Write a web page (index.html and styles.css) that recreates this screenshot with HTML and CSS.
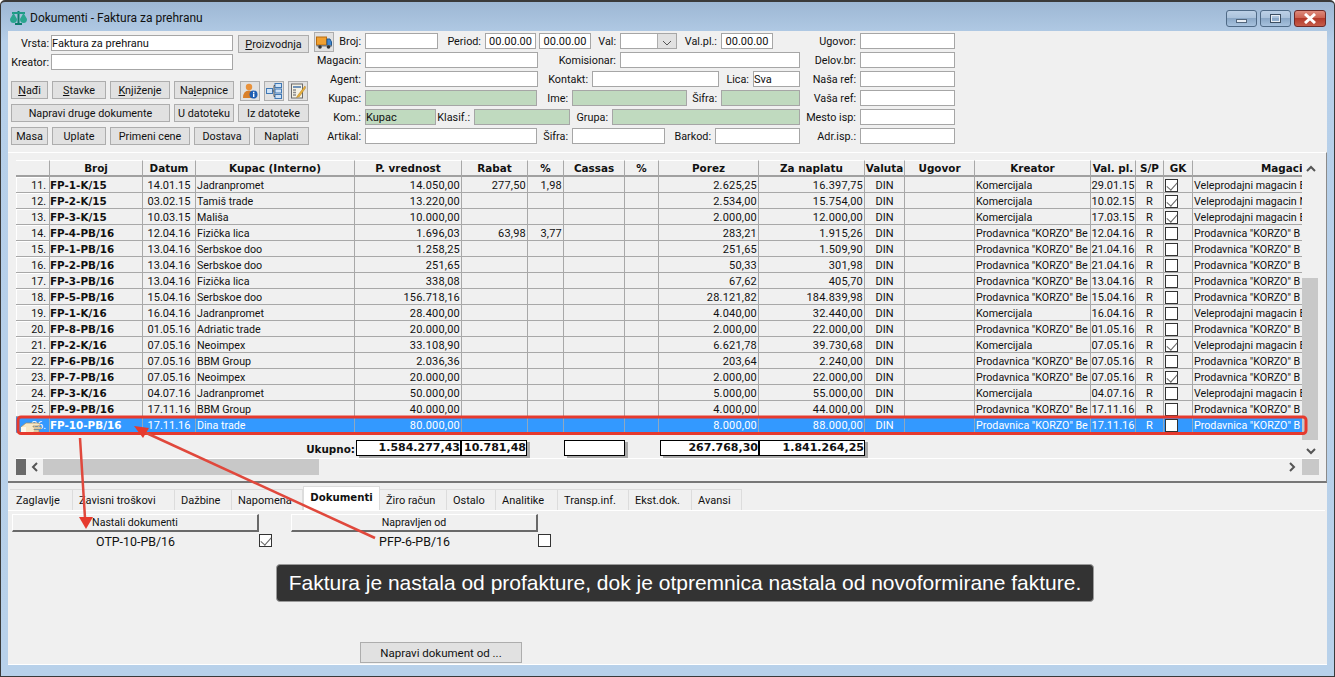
FILE: index.html
```html
<!DOCTYPE html>
<html lang="sr">
<head>
    <meta charset="UTF-8">
    <meta name="viewport" content="width=device-width, initial-scale=1.0">
    <title>Dokumenti - Faktura za prehranu</title>
    <link rel="stylesheet" href="styles.css">
</head>
<body>
<div class="window">
    <div class="titlebar">
        <svg class="app-icon" width="17" height="14" viewBox="0 0 17 14">
            <rect x="7.5" y="0" width="2" height="12" fill="#0d7c6c"/>
            <rect x="2" y="1" width="13" height="2" fill="#1f9a86"/>
            <path d="M0 8 L3.5 2 L7 8 Q7 12 3.5 12 Q0 12 0 8Z" fill="#2aa58f"/>
            <path d="M10 8 L13.5 2 L17 8 Q17 12 13.5 12 Q10 12 10 8Z" fill="#2aa58f"/>
            <rect x="5" y="12" width="7" height="2" fill="#0d7c6c"/>
        </svg>
        <span class="title-text">Dokumenti - Faktura za prehranu</span>
        <div class="caption">
            <div class="cap-btn"><span class="cap-min"></span></div>
            <div class="cap-btn"><span class="cap-max"></span></div>
            <div class="cap-btn cap-close">
                <svg width="14" height="11" viewBox="0 0 14 11"><path d="M2 1 L12 10 M12 1 L2 10" stroke="#fff" stroke-width="3"/></svg>
            </div>
        </div>
    </div>

    <div class="client">
        <div class="form">
            <div class="form-left">
                <div class="top-fields">
                    <label class="lbl">Vrsta:</label>
                    <input class="field" value="Faktura za prehranu">
                    <button class="btn btn-prod"><u>P</u>roizvodnja</button>
                    <label class="lbl">Kreator:</label>
                    <input class="field">
                </div>
                <div class="btn-row">
                    <button class="btn w37"><u>N</u>ađi</button>
                    <button class="btn w54"><u>S</u>tavke</button>
                    <button class="btn w60"><u>K</u>njiženje</button>
                    <button class="btn w60">Na<u>l</u>epnice</button>
                    <button class="btn btn-icon first-icon">
                        <svg width="16" height="16" viewBox="0 0 16 16">
                            <circle cx="7" cy="4" r="3.2" fill="#e8913a"/>
                            <path d="M1 15 Q1 7.5 7 7.5 Q12 7.5 12 15Z" fill="#d9802a"/>
                            <circle cx="11.5" cy="11.5" r="4" fill="#1f5fb4"/>
                            <rect x="11" y="10.5" width="1.4" height="3.5" fill="#fff"/>
                            <rect x="11" y="8.8" width="1.4" height="1.2" fill="#fff"/>
                        </svg>
                    </button>
                    <button class="btn btn-icon">
                        <svg width="16" height="16" viewBox="0 0 16 16">
                            <rect x="9" y="0.5" width="6.5" height="4" fill="#cfe2f5" stroke="#3f78b5"/>
                            <rect x="9" y="11.5" width="6.5" height="4" fill="#cfe2f5" stroke="#3f78b5"/>
                            <rect x="0.5" y="5.5" width="6" height="5" fill="#cfe2f5" stroke="#3f78b5"/>
                            <path d="M6.5 8 H8 M8 2.5 V13.5 M8 2.5 H9 M8 13.5 H9" stroke="#555" fill="none"/>
                            <rect x="9" y="6" width="6.5" height="4" fill="#cfe2f5" stroke="#3f78b5"/>
                        </svg>
                    </button>
                    <button class="btn btn-icon">
                        <svg width="16" height="16" viewBox="0 0 16 16">
                            <rect x="1.5" y="1" width="11" height="14" fill="#f4f1e4" stroke="#6a6a6a"/>
                            <rect x="3" y="3" width="8" height="2" fill="#6f92b8"/>
                            <path d="M3 7 H6 M3 9.5 H6 M3 12 H6" stroke="#8a8a8a" stroke-width="1.4"/>
                            <path d="M15 3 L8 12 L6.5 14.5 L9.5 13.5 L15.5 5Z" fill="#e8b23e" stroke="#b07a1a" stroke-width="0.5"/>
                        </svg>
                    </button>
                </div>
                <div class="btn-row">
                    <button class="btn w159">Napravi druge dokumente</button>
                    <button class="btn w60">U datoteku</button>
                    <button class="btn w71">Iz datoteke</button>
                </div>
                <div class="btn-row">
                    <button class="btn w37">Masa</button>
                    <button class="btn w54">Uplate</button>
                    <button class="btn w80">Primeni cene</button>
                    <button class="btn w56">Dostava</button>
                    <button class="btn w55">Naplati</button>
                </div>
            </div>

            <div class="form-mid">
                <div class="f-row">
                    <button class="btn btn-truck">
                        <svg width="16" height="13" viewBox="0 0 16 13">
                            <rect x="0.5" y="1" width="10" height="8" fill="#f0a030" stroke="#b86c10"/>
                            <path d="M11 3 H14 L15.5 6 V10 H11Z" fill="#3f86d0" stroke="#20588f"/>
                            <rect x="0.5" y="9" width="15" height="1.5" fill="#7a7a7a"/>
                            <circle cx="4" cy="11" r="1.8" fill="#333"/>
                            <circle cx="12.5" cy="11" r="1.8" fill="#333"/>
                        </svg>
                    </button>
                    <label class="lbl l31">Broj:</label><input class="field f73">
                    <label class="lbl l47">Period:</label><input class="field date f51" value="00.00.00"><input class="field date f52 ml3" value="00.00.00">
                    <label class="lbl l29">Val:</label>
                    <div class="combo"><span class="combo-arrow"><svg width="10" height="6" viewBox="0 0 10 6"><path d="M1 1 L5 5 L9 1" fill="none" stroke="#555"/></svg></span></div>
                    <label class="lbl l44">Val.pl.:</label><input class="field date f52" value="00.00.00">
                    <label class="lbl l87">Ugovor:</label><input class="field f95">
                </div>
                <div class="f-row">
                    <label class="lbl l51">Magacin:</label><input class="field f173">
                    <label class="lbl l82">Komisionar:</label><input class="field f180">
                    <label class="lbl l60">Delov.br:</label><input class="field f95">
                </div>
                <div class="f-row">
                    <label class="lbl l51">Agent:</label><input class="field f173">
                    <label class="lbl l54">Kontakt:</label><input class="field f127">
                    <label class="lbl l34">Lica:</label><input class="field f47" value="Sva">
                    <label class="lbl l60">Naša ref:</label><input class="field f95">
                </div>
                <div class="f-row">
                    <label class="lbl l51">Kupac:</label><input class="field green f172">
                    <label class="lbl l35">Ime:</label><input class="field green f115">
                    <label class="lbl l34">Šifra:</label><input class="field green f79">
                    <label class="lbl l60">Vaša ref:</label><input class="field f95">
                </div>
                <div class="f-row">
                    <label class="lbl l51">Kom.:</label><input class="field green f71" value="Kupac">
                    <label class="lbl l38">Klasif.:</label><input class="field green f96">
                    <label class="lbl l42">Grupa:</label><input class="field green f188">
                    <label class="lbl l60">Mesto isp:</label><input class="field f95">
                </div>
                <div class="f-row">
                    <label class="lbl l51">Artikal:</label><input class="field f172">
                    <label class="lbl l35">Šifra:</label><input class="field f93">
                    <label class="lbl l50">Barkod:</label><input class="field f85">
                    <label class="lbl l60">Adr.isp.:</label><input class="field f95">
                </div>
            </div>
        </div>

        <div class="grid-panel">
            <div class="grid-main">
                <div class="grid-left">
                    <table class="docs">
                        <colgroup>
                            <col class="c33"><col class="c93"><col class="c53"><col class="c159"><col class="c107"><col class="c66"><col class="c36"><col class="c61"><col class="c34"><col class="c100"><col class="c106"><col class="c40"><col class="c70"><col class="c116"><col class="c45"><col class="c28"><col class="c29"><col class="c110">
                        </colgroup>
                        <thead>
                            <tr><th></th><th>Broj</th><th>Datum</th><th>Kupac (Interno)</th><th>P. vrednost</th><th>Rabat</th><th>%</th><th>Cassas</th><th>%</th><th>Porez</th><th>Za naplatu</th><th>Valuta</th><th>Ugovor</th><th>Kreator</th><th>Val. pl.</th><th>S/P</th><th>GK</th><th>Magacin</th></tr>
                        </thead>
                        <tbody>
                            <tr><td>11.</td><td>FP-1-K/15</td><td>14.01.15</td><td>Jadranpromet</td><td>14.050,00</td><td>277,50</td><td>1,98</td><td></td><td></td><td>2.625,25</td><td>16.397,75</td><td>DIN</td><td></td><td>Komercijala</td><td>29.01.15</td><td>R</td><td><span class="chk on"></span></td><td>Veleprodajni magacin B</td></tr>
                            <tr><td>12.</td><td>FP-2-K/15</td><td>03.02.15</td><td>Tamiš trade</td><td>13.220,00</td><td></td><td></td><td></td><td></td><td>2.534,00</td><td>15.754,00</td><td>DIN</td><td></td><td>Komercijala</td><td>10.02.15</td><td>R</td><td><span class="chk on"></span></td><td>Veleprodajni magacin N</td></tr>
                            <tr><td>13.</td><td>FP-3-K/15</td><td>10.03.15</td><td>Mališa</td><td>10.000,00</td><td></td><td></td><td></td><td></td><td>2.000,00</td><td>12.000,00</td><td>DIN</td><td></td><td>Komercijala</td><td>17.03.15</td><td>R</td><td><span class="chk on"></span></td><td>Veleprodajni magacin B</td></tr>
                            <tr><td>14.</td><td>FP-4-PB/16</td><td>12.04.16</td><td>Fizička lica</td><td>1.696,03</td><td>63,98</td><td>3,77</td><td></td><td></td><td>283,21</td><td>1.915,26</td><td>DIN</td><td></td><td>Prodavnica "KORZO" Be</td><td>12.04.16</td><td>R</td><td><span class="chk"></span></td><td>Prodavnica "KORZO" B</td></tr>
                            <tr><td>15.</td><td>FP-1-PB/16</td><td>13.04.16</td><td>Serbskoe doo</td><td>1.258,25</td><td></td><td></td><td></td><td></td><td>251,65</td><td>1.509,90</td><td>DIN</td><td></td><td>Prodavnica "KORZO" Be</td><td>21.04.16</td><td>R</td><td><span class="chk"></span></td><td>Prodavnica "KORZO" B</td></tr>
                            <tr><td>16.</td><td>FP-2-PB/16</td><td>13.04.16</td><td>Serbskoe doo</td><td>251,65</td><td></td><td></td><td></td><td></td><td>50,33</td><td>301,98</td><td>DIN</td><td></td><td>Prodavnica "KORZO" Be</td><td>21.04.16</td><td>R</td><td><span class="chk"></span></td><td>Prodavnica "KORZO" B</td></tr>
                            <tr><td>17.</td><td>FP-3-PB/16</td><td>13.04.16</td><td>Fizička lica</td><td>338,08</td><td></td><td></td><td></td><td></td><td>67,62</td><td>405,70</td><td>DIN</td><td></td><td>Prodavnica "KORZO" Be</td><td>13.04.16</td><td>R</td><td><span class="chk"></span></td><td>Prodavnica "KORZO" B</td></tr>
                            <tr><td>18.</td><td>FP-5-PB/16</td><td>15.04.16</td><td>Serbskoe doo</td><td>156.718,16</td><td></td><td></td><td></td><td></td><td>28.121,82</td><td>184.839,98</td><td>DIN</td><td></td><td>Prodavnica "KORZO" Be</td><td>15.04.16</td><td>R</td><td><span class="chk"></span></td><td>Prodavnica "KORZO" B</td></tr>
                            <tr><td>19.</td><td>FP-1-K/16</td><td>16.04.16</td><td>Jadranpromet</td><td>28.400,00</td><td></td><td></td><td></td><td></td><td>4.040,00</td><td>32.440,00</td><td>DIN</td><td></td><td>Komercijala</td><td>16.04.16</td><td>R</td><td><span class="chk"></span></td><td>Veleprodajni magacin B</td></tr>
                            <tr><td>20.</td><td>FP-8-PB/16</td><td>01.05.16</td><td>Adriatic trade</td><td>20.000,00</td><td></td><td></td><td></td><td></td><td>2.000,00</td><td>22.000,00</td><td>DIN</td><td></td><td>Prodavnica "KORZO" Be</td><td>01.05.16</td><td>R</td><td><span class="chk"></span></td><td>Prodavnica "KORZO" B</td></tr>
                            <tr><td>21.</td><td>FP-2-K/16</td><td>07.05.16</td><td>Neoimpex</td><td>33.108,90</td><td></td><td></td><td></td><td></td><td>6.621,78</td><td>39.730,68</td><td>DIN</td><td></td><td>Komercijala</td><td>07.05.16</td><td>R</td><td><span class="chk on"></span></td><td>Veleprodajni magacin B</td></tr>
                            <tr><td>22.</td><td>FP-6-PB/16</td><td>07.05.16</td><td>BBM Group</td><td>2.036,36</td><td></td><td></td><td></td><td></td><td>203,64</td><td>2.240,00</td><td>DIN</td><td></td><td>Prodavnica "KORZO" Be</td><td>07.05.16</td><td>R</td><td><span class="chk"></span></td><td>Prodavnica "KORZO" B</td></tr>
                            <tr><td>23.</td><td>FP-7-PB/16</td><td>07.05.16</td><td>Neoimpex</td><td>20.000,00</td><td></td><td></td><td></td><td></td><td>2.000,00</td><td>22.000,00</td><td>DIN</td><td></td><td>Prodavnica "KORZO" Be</td><td>07.05.16</td><td>R</td><td><span class="chk on"></span></td><td>Prodavnica "KORZO" B</td></tr>
                            <tr><td>24.</td><td>FP-3-K/16</td><td>04.07.16</td><td>Jadranpromet</td><td>50.000,00</td><td></td><td></td><td></td><td></td><td>5.000,00</td><td>55.000,00</td><td>DIN</td><td></td><td>Komercijala</td><td>04.07.16</td><td>R</td><td><span class="chk"></span></td><td>Veleprodajni magacin B</td></tr>
                            <tr><td>25.</td><td>FP-9-PB/16</td><td>17.11.16</td><td>BBM Group</td><td>40.000,00</td><td></td><td></td><td></td><td></td><td>4.000,00</td><td>44.000,00</td><td>DIN</td><td></td><td>Prodavnica "KORZO" Be</td><td>17.11.16</td><td>R</td><td><span class="chk"></span></td><td>Prodavnica "KORZO" B</td></tr>
                            <tr class="selected"><td>26.</td><td>FP-10-PB/16</td><td>17.11.16</td><td>Dina trade</td><td>80.000,00</td><td></td><td></td><td></td><td></td><td>8.000,00</td><td>88.000,00</td><td>DIN</td><td></td><td>Prodavnica "KORZO" Be</td><td>17.11.16</td><td>R</td><td><span class="chk"></span></td><td>Prodavnica "KORZO" B</td></tr>
                        </tbody>
                    </table>
                    <div class="totals">
                        <span class="tot-label">Ukupno:</span>
                        <span class="tot t105">1.584.277,43</span>
                        <span class="tot t66">10.781,48</span>
                        <span class="tot t61 ml37"></span>
                        <span class="tot t99 ml35">267.768,30</span>
                        <span class="tot t106">1.841.264,25</span>
                    </div>
                </div>
                <div class="vscroll">
                    <svg class="chev" width="10" height="7" viewBox="0 0 10 7"><path d="M1 6 L5 2 L9 6" fill="none" stroke="#555" stroke-width="2"/></svg>
                    <div class="vthumb"></div>
                    <svg class="chev" width="10" height="7" viewBox="0 0 10 7"><path d="M1 1 L5 5 L9 1" fill="none" stroke="#555" stroke-width="2"/></svg>
                </div>
            </div>
            <div class="hscroll">
                <div class="hstub"></div>
                <svg class="chev-h" width="7" height="10" viewBox="0 0 7 10"><path d="M6 1 L2 5 L6 9" fill="none" stroke="#555" stroke-width="2"/></svg>
                <div class="hthumb"></div>
                <svg class="chev-r" width="7" height="10" viewBox="0 0 7 10"><path d="M1 1 L5 5 L1 9" fill="none" stroke="#555" stroke-width="2"/></svg>
                <div class="hcorner"></div>
            </div>
        </div>

        <div class="tabs">
            <div class="tab t63">Zaglavlje</div>
            <div class="tab t102">Zavisni troškovi</div>
            <div class="tab t57">Dažbine</div>
            <div class="tab t71">Napomena</div>
            <div class="tab active t77">Dokumenti</div>
            <div class="tab t67">Žiro račun</div>
            <div class="tab t49">Ostalo</div>
            <div class="tab t62">Analitike</div>
            <div class="tab t71">Transp.inf.</div>
            <div class="tab t63">Ekst.dok.</div>
            <div class="tab t50">Avansi</div>
        </div>
        <div class="tab-page">
            <div class="doc-cols">
                <div class="doc">
                    <button class="head-btn">Nastali dokumenti</button>
                    <span class="doc-name">OTP-10-PB/16</span>
                    <span class="chk on"></span>
                </div>
                <div class="doc">
                    <button class="head-btn">Napravljen od</button>
                    <span class="doc-name">PFP-6-PB/16</span>
                    <span class="chk"></span>
                </div>
            </div>
            <button class="btn btn-make">Napravi dokument od ...</button>
        </div>
    </div>

    <svg class="hand" width="28" height="12" viewBox="0 0 28 12">
        <path d="M1 12 V6 L6 2 H17 Q20 2 20 3.5 Q20 5 17 5 H13 V6 H21 V8 H14 V9 H19 V11 H14 L12 12Z" fill="#f6e8c8" stroke="#a98a55" stroke-width="0.7"/>
        <rect x="1" y="6" width="5" height="6" fill="#fdf8ec"/>
    </svg>

    <svg class="marks" width="1335" height="677" viewBox="0 0 1335 677">
        <rect x="18" y="417" width="1288" height="16.5" rx="3" fill="none" stroke="#e63a2e" stroke-width="3"/>
        <line x1="80" y1="438" x2="85" y2="518" stroke="#e0483c" stroke-width="2.5"/>
        <path d="M79 517 L93 517 L86 529Z" fill="#e63a2e"/>
        <line x1="375" y1="538" x2="142" y2="431" stroke="#e0483c" stroke-width="2.5"/>
        <path d="M134 426 L149 428 L143 438Z" fill="#e63a2e"/>
    </svg>

    <div class="note">Faktura je nastala od profakture, dok je otpremnica nastala od novoformirane fakture.</div>
</div>
</body>
</html>
```

FILE: styles.css
```css
* { box-sizing: border-box; }
html, body { margin: 0; height: 100%; overflow: hidden; }
body { font-family: Roboto, "Noto Sans", sans-serif; font-size: 10.8px; color: #111; background: #fff; }

.window { position: relative; width: 1335px; height: 677px; display: flex; flex-direction: column; padding: 0 7px 11px 7px; background: linear-gradient(#9db7d4, #b6cfe9 40px, #b8d1ea); border: 1px solid #3a3a3a; border-width: 2px 1px 1px 1px; border-radius: 5px 5px 0 0; }

.titlebar { height: 29px; flex: none; display: flex; align-items: center; margin-left: 2px; }
.app-icon { margin-right: 3px; margin-top: 3px; }
.title-text { font-size: 12px; color: #111; margin-top: 3px; }
.caption { margin-left: auto; display: flex; gap: 3px; align-self: flex-start; margin-top: 8px; margin-right: 1px; }
.cap-btn { width: 31px; height: 17px; border: 1px solid #4f6a86; border-radius: 3px; background: linear-gradient(#bcd0e6, #a9c1da 50%, #8aa7c6 50%, #a7c2de); display: flex; align-items: center; justify-content: center; }
.cap-min { width: 11px; height: 4px; background: #e8eef5; border: 1px solid #52667c; margin-top: 4px; }
.cap-max { width: 11px; height: 9px; background: transparent; border: 1px solid #3d4f62; box-shadow: inset 0 0 0 1px #e8eef5; }
.cap-close { width: 32px; border-color: #6e2a28; background: linear-gradient(#dd8a7c, #cb5f4e 50%, #b33a2b 50%, #c65c4a); }

.client { flex: 1; background: #f0f0f0; display: flex; flex-direction: column; min-height: 0; border-bottom: 1px solid #fff; }

/* top form */
.form { height: 121px; flex: none; display: flex; }
.form-left { width: 306px; flex: none; padding: 4px 0 0 3px; }
.form-mid { padding-top: 2px; display: flex; flex-direction: column; gap: 3px; }
.top-fields { display: grid; grid-template-columns: 38px 182px 71px; column-gap: 2px; row-gap: 3px; height: 46px; grid-auto-rows: 16px; }
.top-fields .btn-prod { margin-left: 3px; height: 18px; width: 71px; }
.lbl { white-space: nowrap; text-align: right; padding-right: 4px; line-height: 17px; flex: none; }
.top-fields .lbl { padding-right: 0; margin-left: -6px; }
.top-fields .lbl:nth-of-type(2) { grid-row: 2; }
.field { height: 16px; border: 1px solid #a6a6a6; background: #fff; font: inherit; font-size: 11px; color: #111; padding: 0; flex: none; min-width: 0; outline: none; }
.date { text-align: center; }
.green { background: #c0dabf; }
.btn { height: 18px; border: 1px solid #adadad; background: #e1e1e1; font: inherit; color: #111; padding: 0; white-space: nowrap; flex: none; }
.btn-row { display: flex; gap: 4px; height: 18px; margin-bottom: 5px; align-items: flex-start; }
.btn-icon { width: 20px; height: 20px; display: flex; align-items: center; justify-content: center; }
.first-icon { margin-left: 2px; }
.btn-truck { width: 20px; height: 20px; display: flex; align-items: center; justify-content: center; margin-top: -1px; }
.f-row { display: flex; height: 16px; }
.ml3 { margin-left: 3px; }
.combo { width: 57px; height: 16px; flex: none; border: 1px solid #a6a6a6; background: #fff; display: flex; justify-content: flex-end; }
.combo-arrow { width: 19px; background: #e1e1e1; border-left: 1px solid #adadad; display: flex; align-items: center; justify-content: center; padding-top: 4px; }

.w37 { width: 37px; } .w54 { width: 54px; } .w60 { width: 60px; } .w71 { width: 71px; } .w159 { width: 159px; } .w80 { width: 80px; } .w56 { width: 56px; } .w55 { width: 55px; }
.l29 { width: 29px; } .l31 { width: 31px; } .l34 { width: 34px; } .l35 { width: 35px; } .l38 { width: 38px; } .l42 { width: 42px; } .l44 { width: 44px; } .l47 { width: 47px; } .l50 { width: 50px; } .l51 { width: 51px; } .l54 { width: 54px; } .l60 { width: 60px; } .l82 { width: 82px; } .l87 { width: 87px; }
.f47 { width: 47px; } .f51 { width: 51px; } .f52 { width: 52px; } .f71 { width: 71px; } .f73 { width: 73px; } .f79 { width: 79px; } .f85 { width: 85px; } .f93 { width: 93px; } .f95 { width: 95px; } .f96 { width: 96px; } .f115 { width: 115px; } .f127 { width: 127px; } .f172 { width: 172px; } .f173 { width: 173px; } .f180 { width: 180px; } .f188 { width: 188px; }

/* documents grid */
.grid-panel { height: 331px; flex: none; padding: 7px 0 0 8px; border-top: 1px solid #fff; border-right: 1px solid #8a8a8a; border-bottom: 2px solid #777; }
.grid-main { display: flex; height: 298px; }
.grid-left { width: 1286px; flex: none; }
.docs { width: 1286px; table-layout: fixed; border-collapse: separate; border-spacing: 0; }
.docs th { height: 17px; padding: 0; font-family: "DejaVu Sans", sans-serif; font-size: 10.4px; font-weight: bold; text-align: center; border-left: 1px solid #a8a8a8; border-bottom: 2px solid #a0a0a0; border-top: 1px solid #fff; white-space: nowrap; overflow: hidden; line-height: 14px; }
.docs th:first-child { border-left: none; }
.docs th:last-child { text-align: left; padding-left: 68px; }
.docs td { height: 16px; padding: 2px 2px 0; font-size: 10.7px; border-left: 1px solid #a8a8a8; border-bottom: 1px solid #a8a8a8; white-space: nowrap; overflow: hidden; line-height: 13px; }
.docs td:nth-child(1) { border-left: none; text-align: right; padding-right: 3px; box-shadow: inset 1px 1px 0 #fff; }
.docs td:nth-child(2) { font-family: "DejaVu Sans", sans-serif; font-size: 10.4px; font-weight: bold; padding: 1px 0 0; line-height: 14px; }
.docs td:nth-child(3), .docs td:nth-child(12), .docs td:nth-child(15), .docs td:nth-child(16) { text-align: center; padding-left: 0; padding-right: 0; font-size: 11px; }
.docs td:nth-child(17) { padding: 0 0 0 1px; }
.docs td:nth-child(4), .docs td:nth-child(14), .docs td:nth-child(18) { padding-left: 1px; padding-right: 0; }
.docs td:nth-child(n+5):nth-child(-n+11) { text-align: right; padding-right: 1px; font-size: 11px; letter-spacing: 0.2px; }
.selected td { background: #3399ff; color: #fff; border-color: #8fa8c0; }
.selected td:nth-child(1) { box-shadow: none; }
.c33 { width: 33px; } .c93 { width: 93px; } .c53 { width: 53px; } .c159 { width: 159px; } .c107 { width: 107px; } .c66 { width: 66px; } .c36 { width: 36px; } .c61 { width: 61px; } .c34 { width: 34px; } .c100 { width: 100px; } .c106 { width: 106px; } .c40 { width: 40px; } .c70 { width: 70px; } .c116 { width: 116px; } .c45 { width: 45px; } .c28 { width: 28px; } .c29 { width: 29px; } .c110 { width: 110px; }

.chk { display: inline-block; position: relative; width: 13px; height: 13px; background: #fff; border: 1px solid #333; vertical-align: top; margin-top: 1px; }
.chk.on::after { content: ""; position: absolute; left: 3px; top: 0; width: 5px; height: 9px; border: solid #666; border-width: 0 1.5px 1.5px 0; transform: rotate(42deg); }

.totals { display: flex; margin-top: 7px; height: 16px; }
.tot-label { width: 340px; text-align: right; padding-right: 1px; font-family: "DejaVu Sans", sans-serif; font-size: 10.4px; font-weight: bold; line-height: 19px; }
.tot { height: 16px; background: #fff; border: 1px solid #000; box-shadow: 3px 2px 0 #aaa; font-family: "DejaVu Sans", sans-serif; font-size: 11px; font-weight: bold; text-align: right; line-height: 14px; }
.t105 { width: 105px; } .t66 { width: 66px; } .t61 { width: 61px; } .t99 { width: 99px; } .t106 { width: 106px; }
.ml37 { margin-left: 37px; } .ml35 { margin-left: 35px; }

.vscroll { width: 17px; flex: none; display: flex; flex-direction: column; align-items: center; }
.chev { margin-top: 5px; flex: none; }
.vthumb { width: 16px; height: 162px; margin-top: 106px; margin-right: 1px; margin-bottom: 3px; background: #c8c8c8; flex: none; }
.hscroll { display: flex; align-items: center; height: 17px; width: 1303px; border-top: 1px solid #fff; }
.hstub { width: 10px; height: 16px; background: #6a6a6a; }
.chev-h { margin: 0 9px 0 5px; flex: none; }
.hthumb { width: 276px; height: 16px; background: #c8c8c8; margin-left: -4px; }
.chev-r { margin-left: auto; margin-right: 6px; }
.hcorner { width: 17px; height: 16px; background: #c8c8c8; }

/* tabs */
.tabs { display: flex; height: 28px; flex: none; padding: 6px 0 0 2px; border-bottom: 1px solid #fff; align-items: flex-end; margin-right: 2px; }
.tab { height: 21px; padding-left: 6px; line-height: 21px; font-size: 11px; border: 1px solid #dcdcdc; border-bottom: none; border-left: none; white-space: nowrap; }
.tab.active { height: 24px; padding-left: 0; text-align: center; background: #fff; border: 1px solid #dcdcdc; border-bottom: none; font-family: "DejaVu Sans", sans-serif; font-size: 10.2px; font-weight: bold; line-height: 21px; }
.t63 { width: 63px; } .t102 { width: 102px; } .t57 { width: 57px; } .t71 { width: 71px; } .t77 { width: 77px; } .t67 { width: 67px; } .t49 { width: 49px; } .t62 { width: 62px; } .t50 { width: 50px; }
.tab-page { flex: 1; display: flex; flex-direction: column; padding: 3px 0 1px 4px; min-height: 0; }
.doc-cols { display: flex; gap: 19px; }
.doc { display: grid; grid-template-columns: 247px 13px; grid-auto-rows: min-content; }
.head-btn { grid-column: 1; height: 18px; border: 1px solid #fff; border-right: 2px solid #696969; border-bottom: 2px solid #696969; background: #f0f0f0; font: inherit; font-size: 10.6px; color: #111; padding: 0; }
.doc-name { grid-column: 1; grid-row: 2; text-align: center; line-height: 19px; font-size: 12.4px; }
.doc .chk { grid-column: 2; grid-row: 2; margin-top: 2px; }
.btn-make { width: 162px; height: 21px; margin: auto 0 0 348px; font-size: 11.5px; }

/* annotations drawn on top of the window */
.marks { position: absolute; left: -1px; top: -2px; pointer-events: none; }
.hand { position: absolute; left: 19px; top: 419px; }
.note { position: absolute; left: 275px; top: 562px; width: 818px; height: 38px; background: #333; border: 1px solid #9a9a9a; border-radius: 4px; color: #fff; font-family: "Liberation Sans", sans-serif; font-size: 21px; line-height: 36px; text-align: center; white-space: nowrap; }
```
